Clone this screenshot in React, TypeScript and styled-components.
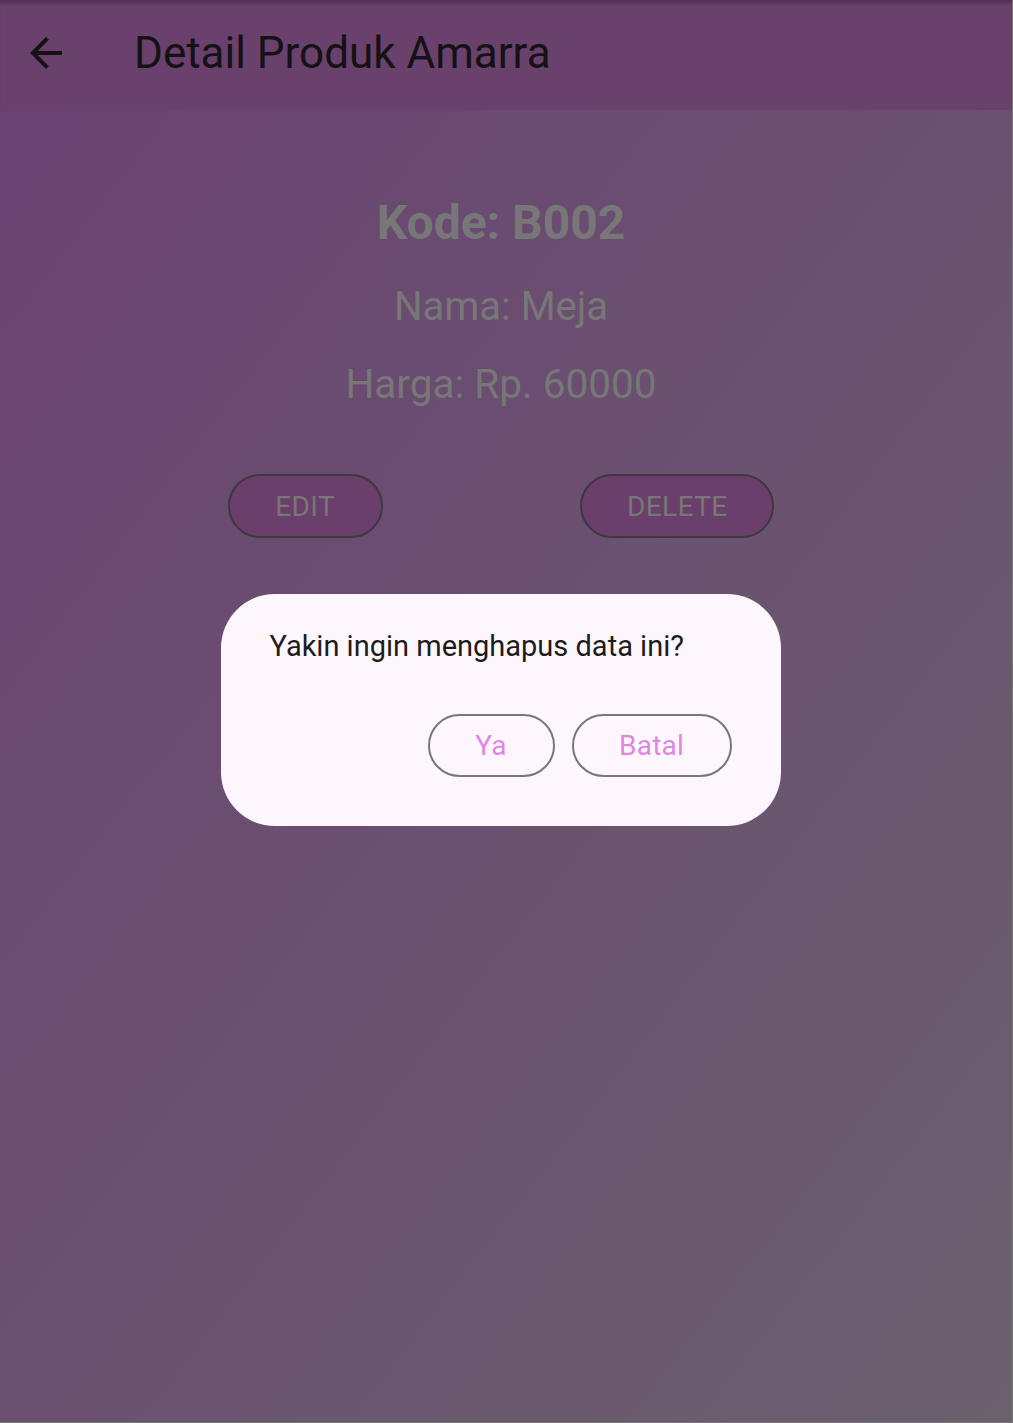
import React from "react";
import styled, { createGlobalStyle } from "styled-components";

const GlobalStyle = createGlobalStyle`
  html, body {
    margin: 0;
    padding: 0;
    background: #767676;
  }
  * { box-sizing: border-box; }
`;

const Frame = styled.div`
  position: relative;
  width: 1012px;
  height: 1422px;
  display: flex;
  flex-direction: column;
  overflow: hidden;
  font-family: Roboto, "Noto Sans", sans-serif;
`;

const AppBar = styled.header`
  height: 110px;
  flex: 0 0 110px;
  display: flex;
  align-items: center;
  padding-bottom: 4px;
  background: #6a406c;
  box-shadow: inset 0 5px 3px -2px rgba(40, 20, 45, 0.35);
`;

const BackButton = styled.button`
  width: 48px;
  height: 48px;
  margin-left: 22px;
  padding: 0;
  border: none;
  background: transparent;
  display: flex;
  align-items: center;
  justify-content: center;
  color: #141214;
`;

const Title = styled.h1`
  margin: 0 0 0 64px;
  font-size: 44px;
  font-weight: 400;
  line-height: 54px;
  color: #141214;
  letter-spacing: 0;
`;

const Body = styled.main`
  flex: 1;
  background: linear-gradient(to bottom right, #6a4372, #6b606e);
  padding-right: 10px;
`;

const Content = styled.section`
  display: flex;
  flex-direction: column;
  align-items: center;
  padding-top: 85px;
`;

const InfoText = styled.p<{ $size: number; $bold?: boolean; $gap: number }>`
  margin: 0 0 ${(p) => p.$gap}px;
  font-size: ${(p) => p.$size}px;
  font-weight: ${(p) => (p.$bold ? 700 : 400)};
  line-height: 1.17;
  color: #777777;
`;

const ButtonRow = styled.div`
  align-self: stretch;
  display: flex;
  justify-content: space-evenly;
  padding: 0 30px;
`;

const PillButton = styled.button<{ $width: number }>`
  width: ${(p) => p.$width}px;
  height: 64px;
  border-radius: 32px;
  border: 2px solid #3d393f;
  background: #6a3f6b;
  color: #777777;
  font-family: Roboto, "Noto Sans", sans-serif;
  font-size: 28px;
  font-weight: 400;
  letter-spacing: 0.4px;
  padding: 0;
`;

const Overlay = styled.div`
  position: absolute;
  inset: 0;
  display: flex;
  align-items: center;
  justify-content: center;
  padding-right: 11px;
  padding-bottom: 2px;
`;

const Dialog = styled.div`
  width: 560px;
  height: 232px;
  background: #fdf7fd;
  border-radius: 54px;
  padding: 31px 49px 49px;
  display: flex;
  flex-direction: column;
  justify-content: space-between;
`;

const DialogText = styled.p`
  margin: 0;
  font-size: 29px;
  line-height: 42px;
  letter-spacing: 0;
  color: #1d1b20;
`;

const DialogActions = styled.div`
  display: flex;
  justify-content: flex-end;
  gap: 17px;
`;

const DialogButton = styled.button<{ $width: number }>`
  width: ${(p) => p.$width}px;
  height: 63px;
  border-radius: 32px;
  border: 2px solid #7a747d;
  background: transparent;
  color: #df86e3;
  font-family: Roboto, "Noto Sans", sans-serif;
  font-size: 28px;
  font-weight: 400;
  letter-spacing: 0.2px;
  padding: 0;
`;

const ArrowBack = () => (
  <svg width="48" height="48" viewBox="0 0 24 24" fill="currentColor">
    <path d="M20 11H7.83l5.59-5.59L12 4l-8 8 8 8 1.41-1.41L7.83 13H20v-2z" />
  </svg>
);

export default function App() {
  return (
    <>
      <GlobalStyle />
      <Frame>
        <AppBar>
          <BackButton aria-label="Kembali">
            <ArrowBack />
          </BackButton>
          <Title>Detail Produk Amarra</Title>
        </AppBar>
        <Body>
          <Content>
            <InfoText $size={48} $bold $gap={33}>
              Kode: B002
            </InfoText>
            <InfoText $size={40} $gap={30}>
              Nama: Meja
            </InfoText>
            <InfoText $size={40.5} $gap={66}>
              Harga: Rp. 60000
            </InfoText>
            <ButtonRow>
              <PillButton $width={155}>EDIT</PillButton>
              <PillButton $width={194}>DELETE</PillButton>
            </ButtonRow>
          </Content>
        </Body>
        <Overlay>
          <Dialog role="dialog">
            <DialogText>Yakin ingin menghapus data ini?</DialogText>
            <DialogActions>
              <DialogButton $width={127}>Ya</DialogButton>
              <DialogButton $width={160}>Batal</DialogButton>
            </DialogActions>
          </Dialog>
        </Overlay>
      </Frame>
    </>
  );
}
